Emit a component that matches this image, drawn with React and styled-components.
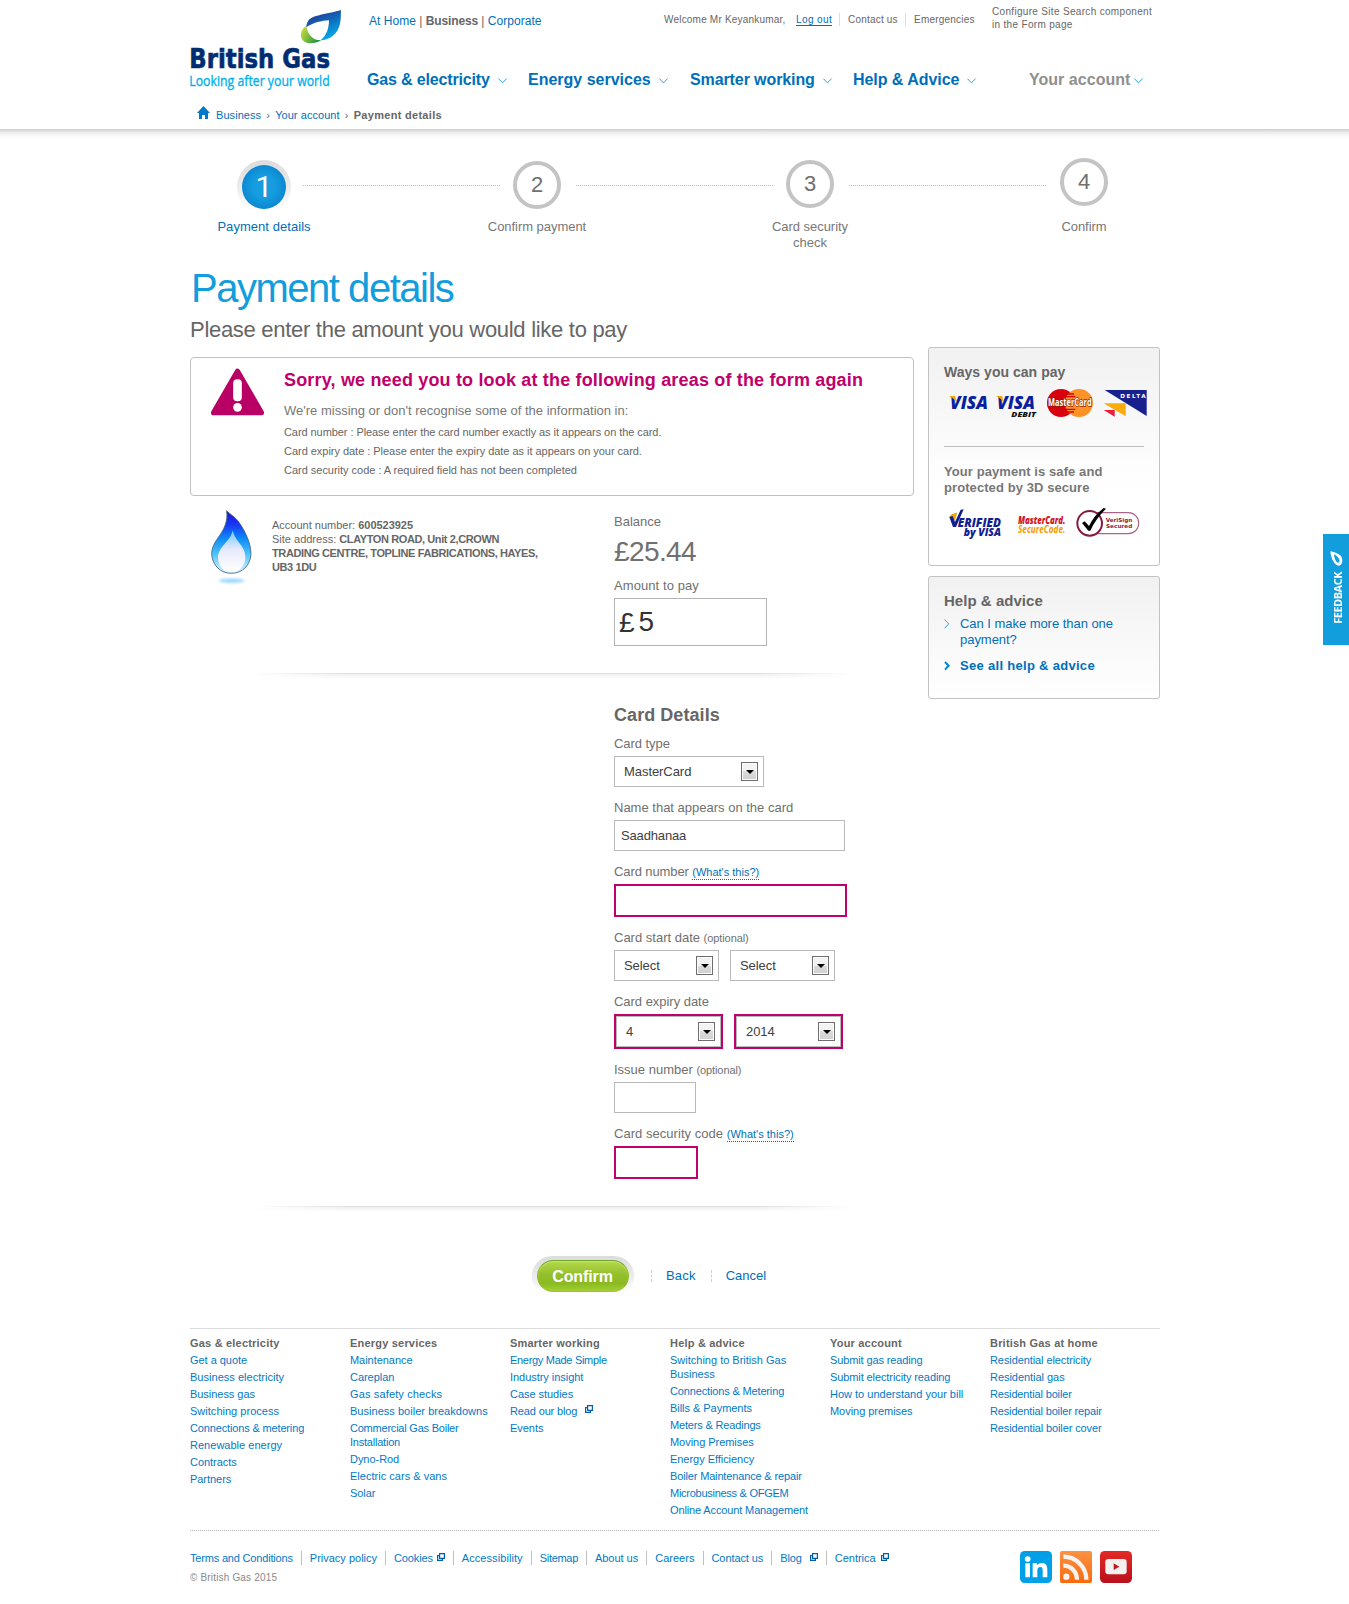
import React from 'react';
import styled, { createGlobalStyle, css } from 'styled-components';

const Global = createGlobalStyle`
  * { box-sizing: border-box; }
  body {
    margin: 0;
    background: #fff;
    color: #666;
    font-family: "Liberation Sans", Arial, sans-serif;
    font-size: 13px;
    line-height: 17px;
  }
  h1, h2, h3, p, ul { margin: 0; padding: 0; }
  ul { list-style: none; }
  a { color: #006fba; text-decoration: none; }
  svg { display: block; flex: none; overflow: visible; }
`;

const Page = styled.div`
  position: relative;
  min-height: 1604px;
  overflow: hidden;
`;

const Wrap = styled.div`
  width: 970px;
  margin: 0 0 0 190px;
`;

/* ---------- header ---------- */

const Header = styled.header`
  height: 129px;
`;

const HeaderShadow = styled.div`
  height: 10px;
  background: linear-gradient(#cdcdcd, #e9e9e9 30%, #f8f8f8 65%, #fff);
`;

const HeaderTop = styled.div`
  display: flex;
  height: 108px;
`;

const LogoLink = styled.a`
  width: 177px;
  padding-top: 10px;
`;

const HeaderMain = styled.div`
  flex: 1;
`;

const TopRow = styled.div`
  display: flex;
  align-items: flex-start;
  height: 70px;
`;

const SiteLinks = styled.div`
  width: 297px;
  padding: 14px 0 0 2px;
  font-size: 12px;
  line-height: 14px;
  letter-spacing: 0.03px;
  b { letter-spacing: -0.15px; }
`;

const Utility = styled.ul`
  display: flex;
  width: 328px;
  padding-top: 13px;
  font-size: 10px;
  line-height: 13px;
`;

const UtilityItem = styled.li`
  height: 13px;
  letter-spacing: ${(p) => p.$ls || 0.2}px;
  ${(p) => p.$width && css`width: ${p.$width}px;`}
  ${(p) => p.$divided && css`
    padding-left: 8px;
    border-left: 1px solid #ddd;
  `}
  a {
    color: ${(p) => (p.$strong ? '#006fba' : '#666')};
    ${(p) => p.$strong && css`border-bottom: 1px solid #006fba;`}
  }
`;

const SearchNote = styled.p`
  width: 166px;
  padding-top: 5px;
  font-size: 10px;
  line-height: 13px;
  letter-spacing: 0.32px;
`;

const Nav = styled.nav`
  display: grid;
  grid-template-columns: 161px 162px 163px 176px auto;
`;

const NavLink = styled.a`
  display: flex;
  align-items: center;
  gap: ${(p) => p.$gap || 8}px;
  font-size: 16px;
  font-weight: 700;
  line-height: 20px;
  letter-spacing: ${(p) => p.$ls}px;
  white-space: nowrap;
  color: ${(p) => (p.$muted ? '#8f8f8f' : '#006fba')};
  svg { margin-top: 2px; }
`;

const Crumbs = styled.div`
  display: flex;
  padding-left: 7px;
  font-size: 11px;
  line-height: 14px;
  a { letter-spacing: 0.06px; }
  svg { margin: -2px 6px 0 0; }
  b { letter-spacing: 0.3px; }
  span { width: 14px; text-align: center; }
`;

/* ---------- stepper ---------- */

const Stepper = styled.ol`
  display: flex;
  height: 108px;
  margin: 19px 0 0 36px;
  padding: 0;
  list-style: none;
`;

const Step = styled.li`
  display: flex;
  flex-direction: column;
  align-items: center;
  flex: none;
  width: 76px;
`;

const StepDot = styled.div`
  height: 61px;
  padding-top: ${(p) => p.$drop}px;
`;

const Circle = styled.div`
  display: grid;
  place-items: center;
  width: 48px;
  height: 48px;
  border: 4px solid #c4c4c4;
  border-radius: 50%;
  font-size: 22px;
  line-height: 24px;
  color: #6f6f6f;
`;

const CircleHalo = styled.div`
  display: grid;
  place-items: center;
  width: 54px;
  height: 54px;
  border-radius: 50%;
  background: linear-gradient(#dcdcdc, #ececec 55%, #fff 95%);
`;

const CircleActive = styled.div`
  display: grid;
  place-items: center;
  width: 44px;
  height: 44px;
  border-radius: 50%;
  background: radial-gradient(circle, #159de0 35%, #0476c6);
  color: #fff;
  font-family: Roboto, "Liberation Sans", sans-serif;
  font-size: 30px;
  line-height: 40px;
`;

const StepLabel = styled.div`
  width: 106px;
  line-height: 16px;
  text-align: center;
  letter-spacing: ${(p) => (p.$active ? 0.05 : -0.04)}px;
  color: ${(p) => (p.$active ? '#006fba' : '#777')};
`;

const StepLine = styled.li`
  flex: none;
  width: 197px;
  height: 1px;
  margin: 27px ${(p) => (p.$last ? 0 : -1)}px 0 1px;
  background: repeating-linear-gradient(90deg, #bdbdbd 0 1px, transparent 1px 2px);
`;

/* ---------- layout ---------- */

const Title = styled.h1`
  padding-left: 1px;
  font-size: 40px;
  font-weight: 400;
  line-height: 44px;
  letter-spacing: -1.48px;
  color: #129ddc;
`;

const Lead = styled.h2`
  margin-top: 7px;
  height: 30px;
  font-size: 22px;
  font-weight: 400;
  line-height: 26px;
  letter-spacing: -0.29px;
`;

const Columns = styled.div`
  display: grid;
  grid-template-columns: 724px 232px;
  column-gap: 14px;
  align-items: start;
`;

const MainCol = styled.main`
  padding-top: 10px;
`;

const ErrorBox = styled.section`
  display: flex;
  height: 139px;
  padding: 10px 20px;
  border: 1px solid #c0c0c0;
  border-radius: 4px;
`;

const ErrorText = styled.div`
  margin-left: 20px;
`;

const ErrorTitle = styled.h3`
  margin-top: 1px;
  font-size: 18px;
  line-height: 22px;
  letter-spacing: 0.17px;
  white-space: nowrap;
  color: #c0006b;
`;

const ErrorIntro = styled.p`
  margin: 11px 0 4px;
  color: #777;
`;

const ErrorItem = styled.p`
  margin-bottom: 1px;
  font-size: 11px;
  line-height: 18px;
  letter-spacing: ${(p) => p.$ls}px;
`;

const Pair = styled.section`
  display: grid;
  grid-template-columns: 424px 300px;
  padding-top: ${(p) => p.$top}px;
`;

const Account = styled.div`
  display: flex;
  align-items: flex-start;
  padding: 1px 0 0 21px;
`;

const AccountText = styled.p`
  width: 270px;
  margin: 8px 0 0 20px;
  font-size: 11px;
  line-height: 14px;
  b { letter-spacing: ${(p) => p.$boldLs}px; }
  b:first-of-type { letter-spacing: -0.03px; }
`;

const Right = styled.div`
  grid-column: 2;
  padding-top: ${(p) => p.$top || 0}px;
`;

const Label = styled.label`
  display: block;
  height: 17px;
  margin-bottom: 4px;
  letter-spacing: ${(p) => p.$ls || 0}px;
  white-space: nowrap;
  color: #707070;
`;

const Hint = styled.small`
  font-size: 11px;
  line-height: 13px;
  letter-spacing: -0.08px;
`;

const HelpLink = styled.a`
  padding-bottom: 1px;
  border-bottom: 1px dotted #006fba;
  font-size: 11px;
  line-height: 13px;
  letter-spacing: 0;
`;

const Balance = styled.div`
  margin: 5px 0 9px;
  font-size: 28px;
  line-height: 33px;
  letter-spacing: -0.6px;
  color: #707070;
`;

const AmountBox = styled.div`
  display: flex;
  align-items: center;
  width: 153px;
  height: 48px;
  padding-left: 4px;
  border: 1px solid #b5b5b5;
  font-size: 28px;
  color: #333;
  input {
    width: 110px;
    height: 40px;
    margin-left: 4px;
    padding: 0;
    border: 0;
    outline: 0;
    background: none;
    font: inherit;
    color: inherit;
  }
`;

const Divider = styled.div`
  height: 8px;
  width: 598px;
  margin: 27px 0 0 64px;
  background:
    linear-gradient(90deg, #fff, transparent 16%, transparent 84%, #fff),
    linear-gradient(#dedede 0 1px, #efefef 1px, #fff 6px);
`;

const SectionTitle = styled.h3`
  margin-bottom: 9px;
  font-size: 18px;
  line-height: 22px;
  letter-spacing: 0.06px;
`;

const Field = styled.div`
  margin-bottom: 12px;
`;

const FieldRow = styled.div`
  display: flex;
  gap: 11px;
`;

const TextInput = styled.input`
  display: block;
  width: ${(p) => p.$width}px;
  height: ${(p) => (p.$error ? 33 : 31)}px;
  padding: 0 6px;
  border: ${(p) => (p.$error ? '2px solid #c0006b' : '1px solid #b9b9b9')};
  border-radius: 0;
  outline: 0;
  font: 13px "Liberation Sans", Arial, sans-serif;
  letter-spacing: -0.15px;
  color: #404040;
`;

const SelectError = styled.div`
  border: 2px solid #c0006b;
`;

const SelectBox = styled.div`
  display: flex;
  align-items: center;
  justify-content: space-between;
  width: ${(p) => p.$width}px;
  height: 31px;
  padding: 0 5px 0 9px;
  border: 1px solid #b9b9b9;
  letter-spacing: -0.06px;
  color: #404040;
`;

const SelectArrow = styled.span`
  display: grid;
  place-items: center;
  width: 17px;
  height: 19px;
  border: 1px solid #6e6e6e;
  background: linear-gradient(#f3f3f3 50%, #dcdcdc 50%, #cfcfcf);
  box-shadow: inset 0 0 0 1px #fcfcfc;
  &::after {
    content: '';
    border: 4px solid transparent;
    border-top-color: #000;
    border-bottom: 0;
  }
`;

const Actions = styled.div`
  display: flex;
  align-items: center;
  height: 40px;
  margin: 42px 0 32px 342px;
`;

const ButtonHalo = styled.div`
  width: 102px;
  height: 40px;
  padding: 4px 5px;
  border-radius: 20px;
  background: linear-gradient(#dcdcdc, #ebebeb 50%, #fff 92%);
  margin-right: 17px;
`;

const Button = styled.button`
  display: block;
  width: 92px;
  height: 32px;
  padding: 2px 1px 0 0;
  border: 1px solid;
  border-color: #6fa52c #8dbb2a #9cc932;
  border-radius: 16px;
  background: linear-gradient(#b5d84c, #93c02c 45%, #8aba22 75%, #a3cf33);
  box-shadow: inset 0 1px 1px #c6e470;
  color: #fff;
  font: bold 16px/26px "Liberation Sans", Arial, sans-serif;
  letter-spacing: -0.1px;
`;

const ActionLink = styled.a`
  margin-right: 15px;
  padding-left: 14px;
  line-height: 12px;
  letter-spacing: ${(p) => p.$ls || 0}px;
  border-left: 1px dashed #cfcfcf;
`;

/* ---------- sidebar ---------- */

const Card = styled.aside`
  height: ${(p) => p.$height}px;
  margin-bottom: 10px;
  padding: 15px 14px 0 15px;
  border: 1px solid #c2c2c2;
  border-radius: 3px;
  background: linear-gradient(#f1f1f1, #fff ${(p) => p.$fade}%);
`;

const CardTitle = styled.h3`
  font-size: ${(p) => p.$size}px;
  line-height: 18px;
  letter-spacing: 0.03px;
`;

const LogoRow = styled.div`
  display: flex;
  align-items: flex-start;
  padding-top: ${(p) => p.$top}px;
`;

const LogoSlot = styled.div`
  margin-left: ${(p) => p.$left}px;
`;

const Rule = styled.hr`
  width: 200px;
  height: 1px;
  margin: 28px 0 17px;
  border: 0;
  background: #bdbdbd;
`;

const Safe = styled.p`
  width: 190px;
  font-weight: 700;
  line-height: 16px;
  letter-spacing: 0.08px;
  color: #777;
`;

const HelpItem = styled.a`
  display: flex;
  align-items: flex-start;
  margin-top: ${(p) => p.$top}px;
  font-weight: ${(p) => (p.$bold ? 700 : 400)};
  letter-spacing: ${(p) => (p.$bold ? 0.3 : -0.04)}px;
  line-height: 16px;
  svg { margin: 3px 10px 0 0; }
`;

const Feedback = styled.a`
  position: absolute;
  top: 534px;
  right: 0;
  display: flex;
  flex-direction: column;
  align-items: center;
  width: 26px;
  height: 111px;
  padding: 17px 0 0 1px;
  background: #129ddc;
  color: #fff;
  span {
    margin: 6px 0 0 3px;
    writing-mode: vertical-rl;
    transform: rotate(180deg);
    font: bold 11px/14px "Open Sans", sans-serif;
    letter-spacing: -0.5px;
    white-space: nowrap;
  }
`;

/* ---------- footer ---------- */

const Footer = styled.footer`
  font-size: 11px;
  line-height: 14px;
  a { color: #0079c8; }
`;

const FooterCols = styled.div`
  display: grid;
  grid-template-columns: repeat(6, 160px);
  height: 202px;
  padding-top: 7px;
  border-top: 1px solid #dcdcdc;
`;

const FooterList = styled.ul`
  width: 144px;
  li { margin-top: 3px; }
`;

const FooterHead = styled.h3`
  font-size: 11px;
  line-height: 14px;
  letter-spacing: 0.2px;
`;

const FooterLink = styled.a`
  display: ${(p) => (p.$icon ? 'flex' : 'inline')};
  gap: 8px;
  letter-spacing: ${(p) => p.$ls}px;
  svg { margin-top: 1px; }
`;

const Dots = styled.div`
  height: 1px;
  background: repeating-linear-gradient(90deg, #b8b8b8 0 1px, transparent 1px 2px);
`;

const FooterBottom = styled.div`
  display: flex;
  justify-content: space-between;
  padding: 20px 28px 0 0;
`;

const Legal = styled.ul`
  display: flex;
  li {
    display: flex;
    padding: 0 8px;
    border-right: 1px solid #c0c0c0;
    white-space: nowrap;
  }
  li:first-child { padding-left: 0; }
  li:last-child { border-right: 0; }
`;

const LegalLink = styled.a`
  display: flex;
  gap: ${(p) => p.$gap || 5}px;
  letter-spacing: ${(p) => p.$ls}px;
  svg { margin-top: 2px; }
`;

const Copyright = styled.p`
  margin-top: 6px;
  font-size: 10px;
  letter-spacing: 0.17px;
  color: #8a8a8a;
`;

const Social = styled.div`
  display: flex;
  gap: 8px;
`;

/* ---------- drawings ---------- */

const BrandLogo = () => (
  <svg width="152" height="82" viewBox="30 30 456 246">
    <defs>
      <linearGradient id="petal" x1="0.2" y1="0" x2="0.7" y2="1">
        <stop offset="0" stopColor="#2b2f86" />
        <stop offset="0.4" stopColor="#1260b4" />
        <stop offset="1" stopColor="#00b4f0" />
      </linearGradient>
      <linearGradient id="leaf" x1="0" y1="0.3" x2="1" y2="0.8">
        <stop offset="0" stopColor="#c6d93a" />
        <stop offset="0.5" stopColor="#6bb43f" />
        <stop offset="1" stopColor="#008c4a" />
      </linearGradient>
    </defs>
    <path fill="url(#leaf)" d="M379 78C366 84 360 101 364 113C370 131 398 136 424 121C401 122 383 106 379 78Z" />
    <path fill="url(#petal)" d="M483 30C446 42 397 44 385 62C380 69 379 76 379 82C400 68 424 62 447 61C447 85 440 106 422 121C449 119 467 104 476 84C484 65 482 46 483 30Z" />
    <text x="28" y="204" fontFamily="DejaVu Sans, sans-serif" fontWeight="700" fontSize="82" fill="#002d72" stroke="#002d72" strokeWidth="2" textLength="422" lengthAdjust="spacingAndGlyphs">British Gas</text>
    <text x="28" y="258" fontFamily="Open Sans, sans-serif" fontSize="43" fill="#00b1eb" stroke="#00b1eb" strokeWidth="1" textLength="421" lengthAdjust="spacingAndGlyphs">Looking after your world</text>
  </svg>
);

const ChevronDown = () => (
  <svg width="9" height="6" viewBox="0 0 9 6" fill="none" stroke="#2ba6e0" strokeWidth="1">
    <path d="M0.4 0.6L4.5 4.9L8.6 0.6" />
  </svg>
);

const ChevronRight = ({ bold }) => (
  <svg width="6" height="10" viewBox="0 0 6 10" fill="none" stroke={bold ? '#0086d4' : '#2ba6e0'} strokeWidth={bold ? 2 : 1}>
    <path d={bold ? 'M1 1L4.6 4.8L1 8.6' : 'M0.5 0.5L4.8 4.9L0.5 9.3'} />
  </svg>
);

const HomeIcon = () => (
  <svg width="13" height="13" viewBox="0 0 39 39" fill="#0079c8">
    <path d="M19.5 0L39 21H33V39H24V27H15V39H6V21H0Z" />
  </svg>
);

const WindowIcon = () => (
  <svg width="8" height="8" viewBox="0 0 8 8" fill="none" stroke="#005eb0" strokeWidth="1.2">
    <path d="M2.6 0.6H7.4V5.4H2.6Z" />
    <path d="M2.6 2.6H0.6V7.4H5.4V5.4" />
  </svg>
);

const WarningIcon = () => (
  <svg width="53" height="48" viewBox="0 0 159 144">
    <path d="M79.5 10L151 134H8Z" fill="#b90064" stroke="#b90064" strokeWidth="16" strokeLinejoin="round" />
    <rect x="66.5" y="34" width="26" height="66" rx="12" fill="#fff" />
    <circle cx="79.5" cy="118" r="13" fill="#fff" />
  </svg>
);

const GasDrop = () => (
  <svg width="41" height="76" viewBox="92 495 123 228">
    <defs>
      <linearGradient id="drop" x1="0" y1="0" x2="0" y2="1">
        <stop offset="0" stopColor="#2412c8" />
        <stop offset="0.22" stopColor="#1638f5" />
        <stop offset="0.45" stopColor="#0e8df5" />
        <stop offset="0.7" stopColor="#52c3fa" />
        <stop offset="1" stopColor="#e4f7ff" />
      </linearGradient>
      <linearGradient id="glow" x1="0" y1="0" x2="0" y2="1">
        <stop offset="0" stopColor="#6cc8fb" />
        <stop offset="0.45" stopColor="#e6e9fb" />
        <stop offset="1" stopColor="#fff" />
      </linearGradient>
      <filter id="soft" x="-20%" y="-60%" width="140%" height="220%"><feGaussianBlur stdDeviation="4" /></filter>
    </defs>
    <ellipse cx="154" cy="707" rx="38" ry="6" fill="#8fd0fa" filter="url(#soft)" />
    <path d="M139 497C143 530 132 552 112 580C98 600 94 614 94 628C96 662 122 685 153 685C187 685 210 660 212 628C212 594 195 560 176 532C163 514 149 508 139 497Z" fill="url(#drop)" stroke="#3c6482" strokeWidth="2.5" />
    <path d="M157 556C151 590 115 603 113 638C113 664 132 681 154 681C177 681 196 662 195 635C194 600 164 592 157 556Z" fill="url(#glow)" />
  </svg>
);

const markFont = 'Open Sans, sans-serif';

const Visa = ({ debit }) => (
  <svg width={debit ? 41 : 40} height="30" viewBox={debit ? '228 144 123 90' : '86 144 120 90'}>
    <g transform={debit ? 'translate(142 0)' : undefined}>
      <text x="89" y="206" fontFamily={markFont} fontWeight="800" fontStyle="italic" fontSize="53" fill="#0a1fa0" textLength="114" lengthAdjust="spacingAndGlyphs">VISA</text>
      <path d="M86 168H104L110 190C105 180 97 173 86 168Z" fill="#f7a600" />
    </g>
    {debit && <text x="274" y="231" fontFamily={markFont} fontWeight="800" fontStyle="italic" fontSize="21" fill="#111" textLength="74" lengthAdjust="spacingAndGlyphs">DEBIT</text>}
  </svg>
);

const MasterCard = () => (
  <svg width="46" height="30" viewBox="381 144 138 90">
    <circle cx="423" cy="189" r="42" fill="#d8000c" />
    <circle cx="477" cy="189" r="42" fill="#ff9226" />
    <path d="M440 162H462M436 170H466M436 208H466M440 216H462" stroke="#d8000c" strokeWidth="4" />
    <text x="384" y="199" fontFamily={markFont} fontWeight="700" fontSize="30" fill="#fff" stroke="#8c1a08" strokeWidth="4" paintOrder="stroke" textLength="131" lengthAdjust="spacingAndGlyphs">MasterCard</text>
  </svg>
);

const Delta = () => (
  <svg width="44" height="30" viewBox="547 144 132 90">
    <path d="M552 150H678V228Z" fill="#17208c" />
    <path d="M549 190H615V229Z" fill="#fbab0c" />
    <path d="M549 210H582V230Z" fill="#ee1c3c" />
    <text x="599" y="175" fontFamily="DejaVu Sans, sans-serif" fontWeight="700" fontSize="17" fill="#fff" textLength="76">DELTA</text>
  </svg>
);

const VerifiedByVisa = () => (
  <svg width="54" height="31" viewBox="84 503 162 93">
    <g fontFamily={markFont} fontWeight="800" fontStyle="italic" fill="#10208f">
      <path d="M88 529C94 520 104 517 112 517L105 540Z" fill="#f7a600" />
      <path d="M88 530L98 527L105 545L122 508L131 507L108 560H99Z" />
      <text x="113" y="559" fontSize="38" textLength="130" lengthAdjust="spacingAndGlyphs">ERIFIED</text>
      <text x="131" y="588" fontSize="31" textLength="112" lengthAdjust="spacingAndGlyphs">by VISA</text>
    </g>
  </svg>
);

const SecureCode = () => (
  <svg width="48" height="31" viewBox="294 503 144 93">
    <text x="294" y="552" fontFamily={markFont} fontWeight="800" fontStyle="italic" fontSize="31" fill="#d3121b" textLength="142" lengthAdjust="spacingAndGlyphs">MasterCard.</text>
    <text x="294" y="579" fontFamily={markFont} fontWeight="700" fontStyle="italic" fontSize="30" fill="#f59a00" textLength="142" lengthAdjust="spacingAndGlyphs">SecureCode.</text>
  </svg>
);

const VeriSign = () => (
  <svg width="64" height="31" viewBox="467 503 192 93">
    <rect x="500" y="517" width="155" height="63" rx="31" fill="#fff" stroke="#a8648a" strokeWidth="3.5" />
    <circle cx="508" cy="549" r="37" fill="#fff" stroke="#861a42" strokeWidth="6" />
    <path d="M485 548L493 543L506 557C516 536 530 518 550 503L557 505C536 526 520 548 510 571H504Z" fill="#000" />
    <text x="556" y="545" fontFamily="DejaVu Sans, sans-serif" fontWeight="700" fontSize="16" fill="#861a42" textLength="80" lengthAdjust="spacingAndGlyphs">VeriSign</text>
    <text x="557" y="563" fontFamily="DejaVu Sans, sans-serif" fontWeight="700" fontSize="16" fill="#861a42" textLength="79" lengthAdjust="spacingAndGlyphs">Secured</text>
  </svg>
);

const FeedbackLeaf = () => (
  <svg width="13" height="15" viewBox="0 0 39 45">
    <path fill="#fff" fillRule="evenodd" d="M1 1C12 3 30 8 35 19C40 32 35 44 26 44C14 43 3 25 1 1ZM12 10C13 24 19 35 25 35C32 34 29 18 12 10Z" />
  </svg>
);

const LinkedIn = () => (
  <svg width="32" height="32" viewBox="0 0 96 96">
    <rect width="96" height="96" rx="14" fill="#00a0e8" />
    <circle cx="23" cy="24" r="8.5" fill="#fff" />
    <path fill="#fff" d="M16 37H30V79H16ZM38 37H51V43C55 38 60 36 66 36C77 36 82 43 82 55V79H68V57C68 51 66 48 61 48C55 48 52 52 52 58V79H38Z" />
  </svg>
);

const Rss = () => (
  <svg width="32" height="32" viewBox="0 0 96 96">
    <defs>
      <linearGradient id="rss" x1="0" y1="0" x2="0" y2="1">
        <stop offset="0" stopColor="#fb9244" />
        <stop offset="1" stopColor="#f96a0b" />
      </linearGradient>
    </defs>
    <rect width="96" height="96" rx="6" fill="url(#rss)" />
    <g fill="none" stroke="#f6f3f0" strokeWidth="13">
      <path d="M10 44C33 44 51 62 51 86" />
      <path d="M10 17C48 17 79 48 79 86" />
    </g>
    <circle cx="19" cy="77" r="9.5" fill="#f6f3f0" />
  </svg>
);

const YouTube = () => (
  <svg width="32" height="32" viewBox="0 0 96 96">
    <defs>
      <linearGradient id="yt" x1="0" y1="0" x2="0" y2="1">
        <stop offset="0" stopColor="#e32a25" />
        <stop offset="1" stopColor="#b8101c" />
      </linearGradient>
    </defs>
    <rect width="96" height="96" rx="14" fill="url(#yt)" />
    <rect x="16" y="24" width="64" height="46" rx="9" fill="#f3f0f0" />
    <path d="M41 37L58 47L41 57Z" fill="#c8161d" />
  </svg>
);

/* ---------- content ---------- */

const navItems = [
  { text: 'Gas & electricity', ls: -0.16 },
  { text: 'Energy services', ls: 0 },
  { text: 'Smarter working', ls: -0.1 },
  { text: 'Help & Advice', ls: -0.05 },
  { text: 'Your account', ls: 0.03, muted: true, gap: 4 },
];

const steps = [
  { n: 1, label: 'Payment details', drop: 2, active: true },
  { n: 2, label: 'Confirm payment', drop: 3 },
  { n: 3, label: 'Card security check', drop: 2 },
  { n: 4, label: 'Confirm', drop: 0 },
];

const footerCols = [
  ['Gas & electricity', ['Get a quote', 'Business electricity', 'Business gas', 'Switching process', 'Connections & metering', 'Renewable energy', 'Contracts', 'Partners']],
  ['Energy services', ['Maintenance', 'Careplan', 'Gas safety checks', 'Business boiler breakdowns', 'Commercial Gas Boiler Installation', 'Dyno-Rod', 'Electric cars & vans', 'Solar']],
  ['Smarter working', ['Energy Made Simple', 'Industry insight', 'Case studies', 'Read our blog', 'Events']],
  ['Help & advice', ['Switching to British Gas Business', 'Connections & Metering', 'Bills & Payments', 'Meters & Readings', 'Moving Premises', 'Energy Efficiency', 'Boiler Maintenance & repair', 'Microbusiness & OFGEM', 'Online Account Management']],
  ['Your account', ['Submit gas reading', 'Submit electricity reading', 'How to understand your bill', 'Moving premises']],
  ['British Gas at home', ['Residential electricity', 'Residential gas', 'Residential boiler', 'Residential boiler repair', 'Residential boiler cover']],
];

const linkSpacing = {
  'Business boiler breakdowns': 0.03,
  'Switching to British Gas Business': 0,
  'How to understand your bill': 0,
  'Business electricity': 0.03,
  'Switching process': 0.02,
  'Renewable energy': 0.02,
  'Gas safety checks': 0.14,
  'Electric cars & vans': 0.02,
  'Commercial Gas Boiler Installation': -0.22,
  'Energy Made Simple': -0.3,
  'Read our blog': -0.14,
  'Connections & metering': -0.15,
  'Connections & Metering': -0.15,
  'Meters & Readings': -0.17,
  'Boiler Maintenance & repair': -0.15,
  'Microbusiness & OFGEM': -0.27,
  'Online Account Management': -0.13,
  'Submit electricity reading': -0.1,
  'Submit gas reading': -0.12,
  'Residential electricity': -0.09,
  'Residential boiler repair': -0.15,
  'Residential boiler cover': -0.12,
  'Residential boiler': -0.15,
};

const legal = [
  { text: 'Terms and Conditions', ls: -0.18 },
  { text: 'Privacy policy' },
  { text: 'Cookies', icon: true, ls: -0.15, gap: 4 },
  { text: 'Accessibility', ls: 0.08 },
  { text: 'Sitemap', ls: -0.3 },
  { text: 'About us', ls: -0.03 },
  { text: 'Careers', ls: 0.03 },
  { text: 'Contact us', ls: -0.08 },
  { text: 'Blog', icon: true, gap: 8, ls: -0.15 },
  { text: 'Centrica', icon: true },
];

const Select = ({ width, value }) => (
  <SelectBox $width={width}>
    {value}
    <SelectArrow />
  </SelectBox>
);

export default function App() {
  return (
    <Page>
      <Global />
      <Header>
        <Wrap>
          <HeaderTop>
            <LogoLink href="#"><BrandLogo /></LogoLink>
            <HeaderMain>
              <TopRow>
                <SiteLinks>
                  <a href="#">At Home</a> | <b>Business</b> | <a href="#">Corporate</a>
                </SiteLinks>
                <Utility>
                  <UtilityItem $width={132}>Welcome Mr Keyankumar,</UtilityItem>
                  <UtilityItem $width={43} $ls={0.4} $strong><a href="#">Log out</a></UtilityItem>
                  <UtilityItem $width={66} $divided><a href="#">Contact us</a></UtilityItem>
                  <UtilityItem $divided $ls={0.22}><a href="#">Emergencies</a></UtilityItem>
                </Utility>
                <SearchNote>Configure Site Search component in the Form page</SearchNote>
              </TopRow>
              <Nav>
                {navItems.map((n) => (
                  <NavLink key={n.text} href="#" $ls={n.ls} $muted={n.muted} $gap={n.gap}>
                    {n.text}
                    <ChevronDown />
                  </NavLink>
                ))}
              </Nav>
            </HeaderMain>
          </HeaderTop>
          <Crumbs>
            <HomeIcon />
            <a href="#">Business</a>
            <span>›</span>
            <a href="#">Your account</a>
            <span>›</span>
            <b>Payment details</b>
          </Crumbs>
        </Wrap>
      </Header>
      <HeaderShadow />

      <Wrap>
        <Stepper>
          {steps.map((s, i) => (
            <React.Fragment key={s.n}>
              {i > 0 && <StepLine $last={i === steps.length - 1} />}
              <Step>
                <StepDot $drop={s.drop}>
                  {s.active
                    ? <CircleHalo><CircleActive>{s.n}</CircleActive></CircleHalo>
                    : <Circle>{s.n}</Circle>}
                </StepDot>
                <StepLabel $active={s.active}>{s.label}</StepLabel>
              </Step>
            </React.Fragment>
          ))}
        </Stepper>

        <Title>Payment details</Title>
        <Lead>Please enter the amount you would like to pay</Lead>

        <Columns>
          <MainCol>
            <ErrorBox>
              <WarningIcon />
              <ErrorText>
                <ErrorTitle>Sorry, we need you to look at the following areas of the form again</ErrorTitle>
                <ErrorIntro>We're missing or don't recognise some of the information in:</ErrorIntro>
                <ErrorItem $ls={-0.07}>Card number : Please enter the card number exactly as it appears on the card.</ErrorItem>
                <ErrorItem $ls={-0.03}>Card expiry date : Please enter the expiry date as it appears on your card.</ErrorItem>
                <ErrorItem $ls={-0.02}>Card security code : A required field has not been completed</ErrorItem>
              </ErrorText>
            </ErrorBox>

            <Pair $top={13}>
              <Account>
                <GasDrop />
                <AccountText $boldLs={-0.39}>
                  Account number: <b>600523925</b><br />
                  Site address: <b>CLAYTON ROAD, Unit 2,CROWN TRADING CENTRE, TOPLINE FABRICATIONS, HAYES, UB3 1DU</b>
                </AccountText>
              </Account>
              <Right $top={4}>
                <Label as="div">Balance</Label>
                <Balance>£25.44</Balance>
                <Label $ls={0.08}>Amount to pay</Label>
                <AmountBox>£<input defaultValue="5" /></AmountBox>
              </Right>
            </Pair>
            <Divider />

            <Pair $top={23}>
              <Right>
                <SectionTitle>Card Details</SectionTitle>
                <Field>
                  <Label $ls={-0.06}>Card type</Label>
                  <Select width={150} value="MasterCard" />
                </Field>
                <Field>
                  <Label>Name that appears on the card</Label>
                  <TextInput $width={231} defaultValue="Saadhanaa" />
                </Field>
                <Field>
                  <Label $ls={-0.1}>Card number <HelpLink href="#">(What's this?)</HelpLink></Label>
                  <TextInput $width={233} $error />
                </Field>
                <Field>
                  <Label>Card start date <Hint>(optional)</Hint></Label>
                  <FieldRow>
                    <Select width={105} value="Select" />
                    <Select width={105} value="Select" />
                  </FieldRow>
                </Field>
                <Field>
                  <Label $ls={-0.03}>Card expiry date</Label>
                  <FieldRow>
                    <SelectError><Select width={105} value="4" /></SelectError>
                    <SelectError><Select width={105} value="2014" /></SelectError>
                  </FieldRow>
                </Field>
                <Field>
                  <Label>Issue number <Hint>(optional)</Hint></Label>
                  <TextInput $width={82} />
                </Field>
                <Label $ls={0.04}>Card security code <HelpLink href="#">(What's this?)</HelpLink></Label>
                <TextInput $width={84} $error />
              </Right>
            </Pair>
            <Divider />

            <Actions>
              <ButtonHalo><Button type="button">Confirm</Button></ButtonHalo>
              <ActionLink href="#" $ls={0.2}>Back</ActionLink>
              <ActionLink href="#">Cancel</ActionLink>
            </Actions>
          </MainCol>

          <div>
            <Card $height={219} $fade={65}>
              <CardTitle $size={14}>Ways you can pay</CardTitle>
              <LogoRow $top={7}>
                <LogoSlot $left={5}><Visa /></LogoSlot>
                <LogoSlot $left={7}><Visa debit /></LogoSlot>
                <LogoSlot $left={10}><MasterCard /></LogoSlot>
                <LogoSlot $left={10}><Delta /></LogoSlot>
              </LogoRow>
              <Rule />
              <Safe>Your payment is safe and protected by 3D secure</Safe>
              <LogoRow $top={12}>
                <LogoSlot $left={4}><VerifiedByVisa /></LogoSlot>
                <LogoSlot $left={16}><SecureCode /></LogoSlot>
                <LogoSlot $left={10}><VeriSign /></LogoSlot>
              </LogoRow>
            </Card>
            <Card $height={123} $fade={100}>
              <CardTitle $size={15}>Help &amp; advice</CardTitle>
              <HelpItem href="#" $top={6}>
                <ChevronRight />
                <span>Can I make more than one<br />payment?</span>
              </HelpItem>
              <HelpItem href="#" $top={10} $bold>
                <ChevronRight bold />
                <span>See all help &amp; advice</span>
              </HelpItem>
            </Card>
          </div>
        </Columns>

        <Footer>
          <FooterCols>
            {footerCols.map(([head, links]) => (
              <div key={head}>
                <FooterHead>{head}</FooterHead>
                <FooterList>
                  {links.map((l) => (
                    <li key={l}>
                      <FooterLink href="#" $ls={linkSpacing[l] ?? -0.04} $icon={l === 'Read our blog'}>
                        {l}
                        {l === 'Read our blog' && <WindowIcon />}
                      </FooterLink>
                    </li>
                  ))}
                </FooterList>
              </div>
            ))}
          </FooterCols>
          <Dots />
          <FooterBottom>
            <div>
              <Legal>
                {legal.map((l) => (
                  <li key={l.text}>
                    <LegalLink href="#" $ls={l.ls || 0} $gap={l.gap}>
                      {l.text}
                      {l.icon && <WindowIcon />}
                    </LegalLink>
                  </li>
                ))}
              </Legal>
              <Copyright>© British Gas 2015</Copyright>
            </div>
            <Social>
              <LinkedIn />
              <Rss />
              <YouTube />
            </Social>
          </FooterBottom>
        </Footer>
      </Wrap>

      <Feedback href="#">
        <FeedbackLeaf />
        <span>FEEDBACK</span>
      </Feedback>
    </Page>
  );
}
